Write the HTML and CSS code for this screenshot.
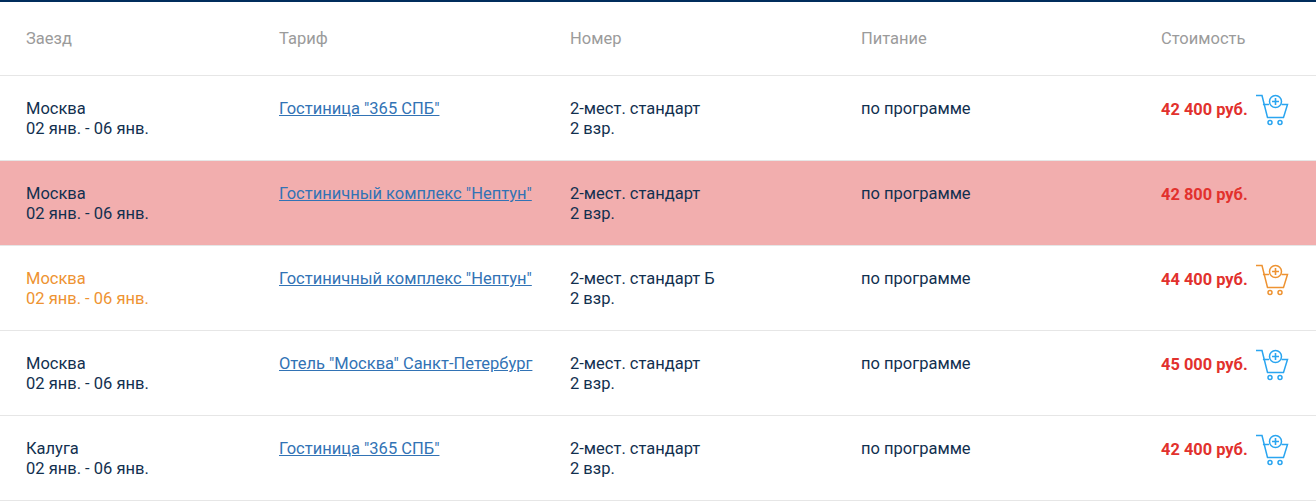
FILE: index.html
```html
<!DOCTYPE html>
<html lang="ru">
<head>
<meta charset="utf-8">
<title>Тарифы</title>
<link rel="stylesheet" href="styles.css">
</head>
<body>
<svg class="defs" width="0" height="0" aria-hidden="true">
  <symbol id="cart" viewBox="0 0 34 34">
    <path d="M1 1.5H7L12.5 23.5H28.5L32.5 10.5H26.5M14 10.5H7.9" fill="none" stroke="currentColor" stroke-width="1.5"/>
    <circle cx="20.5" cy="7.5" r="6" fill="none" stroke="currentColor" stroke-width="1.5"/>
    <path d="M20.5 4V11M17 7.5H24" fill="none" stroke="currentColor" stroke-width="1.6"/>
    <circle cx="15" cy="28.5" r="2" fill="none" stroke="currentColor" stroke-width="1.5"/>
    <circle cx="25" cy="28.5" r="2" fill="none" stroke="currentColor" stroke-width="1.5"/>
  </symbol>
</svg>
<div class="table">
  <div class="row head">
    <div>Заезд</div><div>Тариф</div><div>Номер</div><div>Питание</div><div>Стоимость</div>
  </div>
  <div class="row">
    <div>Москва<br>02 янв. - 06 янв.</div>
    <div><a href="#">Гостиница "365 СПБ"</a></div>
    <div>2-мест. стандарт<br>2 взр.</div>
    <div>по программе</div>
    <div class="cost"><span class="price">42 400 руб.</span><svg class="cart"><use href="#cart"/></svg></div>
  </div>
  <div class="row sold">
    <div>Москва<br>02 янв. - 06 янв.</div>
    <div><a href="#">Гостиничный комплекс "Нептун"</a></div>
    <div>2-мест. стандарт<br>2 взр.</div>
    <div>по программе</div>
    <div class="cost"><span class="price">42 800 руб.</span></div>
  </div>
  <div class="row warn">
    <div class="city">Москва<br>02 янв. - 06 янв.</div>
    <div><a href="#">Гостиничный комплекс "Нептун"</a></div>
    <div>2-мест. стандарт Б<br>2 взр.</div>
    <div>по программе</div>
    <div class="cost"><span class="price">44 400 руб.</span><svg class="cart"><use href="#cart"/></svg></div>
  </div>
  <div class="row">
    <div>Москва<br>02 янв. - 06 янв.</div>
    <div><a href="#">Отель "Москва" Санкт-Петербург</a></div>
    <div>2-мест. стандарт<br>2 взр.</div>
    <div>по программе</div>
    <div class="cost"><span class="price">45 000 руб.</span><svg class="cart"><use href="#cart"/></svg></div>
  </div>
  <div class="row">
    <div>Калуга<br>02 янв. - 06 янв.</div>
    <div><a href="#">Гостиница "365 СПБ"</a></div>
    <div>2-мест. стандарт<br>2 взр.</div>
    <div>по программе</div>
    <div class="cost"><span class="price">42 400 руб.</span><svg class="cart"><use href="#cart"/></svg></div>
  </div>
</div>
</body>
</html>
```
FILE: styles.css
```css
html, body {
  margin: 0;
  padding: 0;
  background: #fff;
}
body {
  font-family: Roboto, "Liberation Sans", sans-serif;
  font-size: 16.5px;
  line-height: 20px;
  color: #12304f;
}
.defs {
  position: absolute;
}
.table {
  border-top: 2px solid #002d5c;
}
.row {
  display: grid;
  grid-template-columns: 253px 291px 291px 300px 1fr;
  height: 85px;
  box-sizing: border-box;
  padding: 23px 0 0 26px;
  border-bottom: 1px solid #e6e6e6;
}
.head {
  height: 74px;
  padding-top: 27px;
  color: #9b9b9b;
}
.sold {
  background: #f2aeae;
}
.warn .city {
  color: #ee9332;
}
.warn .cart {
  color: #ee9332;
}
a {
  color: #3273b5;
  text-decoration: underline;
}
.cost {
  display: flex;
  align-items: flex-start;
}
.price {
  font-size: 16.4px;
  font-weight: 700;
  color: #e2312d;
  margin-top: 1px;
}
.cart {
  width: 34px;
  height: 34px;
  margin: -5px 0 0 7px;
  color: #2aa5f0;
}
```
